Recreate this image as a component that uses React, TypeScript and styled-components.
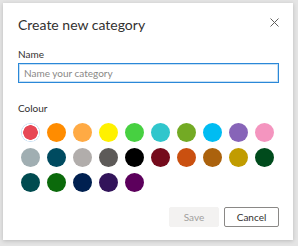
import styled, { createGlobalStyle } from 'styled-components';

const GlobalStyle = createGlobalStyle`
  html, body {
    margin: 0;
    padding: 0;
    background: #e4e4e4;
    font-family: Lato, "Open Sans", sans-serif;
  }
`;

const Page = styled.div`
  width: 298px;
  height: 246px;
  padding: 3px 5px 6px 3px;
  box-sizing: border-box;
`;

const Dialog = styled.div`
  height: 237px;
  background: #fff;
  box-shadow: 0 1px 4px rgba(0, 0, 0, 0.18);
  padding: 11px 14px 0 15px;
  box-sizing: border-box;
  display: flex;
  flex-direction: column;
`;

const Header = styled.div`
  display: flex;
  justify-content: space-between;
  align-items: flex-start;
  height: 22px;
`;

const Title = styled.h1`
  margin: 0;
  font-size: 14px;
  line-height: 22px;
  font-weight: 400;
  color: #323130;
`;

const CloseButton = styled.button`
  border: none;
  background: none;
  padding: 0;
  margin-top: 4px;
  width: 9px;
  height: 9px;
  display: flex;
`;

const Label = styled.div<{ $top: number }>`
  font-size: 10px;
  line-height: 14px;
  color: #323130;
  margin-top: ${(p) => p.$top}px;
`;

const Input = styled.input`
  margin-top: 2px;
  width: 100%;
  height: 20px;
  box-sizing: border-box;
  border: 1px solid #2b88d8;
  box-shadow: inset 0 0 0 1px #c7e0f4;
  padding: 0 5px;
  font-family: inherit;
  font-size: 10px;
  color: #323130;
  outline: none;
  &::placeholder {
    color: #8a8886;
  }
`;

const Swatches = styled.div`
  margin-top: 8px;
  display: grid;
  grid-template-columns: repeat(10, 19px);
  column-gap: 7px;
  row-gap: 6px;
  padding-left: 3px;
`;

const Swatch = styled.div<{ $color: string; $selected?: boolean }>`
  width: 19px;
  height: 19px;
  border-radius: 50%;
  background: ${(p) =>
    p.$selected
      ? `radial-gradient(circle, ${p.$color} 0 7px, #fff 7.5px 8.5px, #c7e0f4 9px)`
      : p.$color};
`;

const Footer = styled.div`
  margin-top: auto;
  margin-bottom: 13px;
  display: flex;
  justify-content: flex-end;
  gap: 5px;
`;

const Button = styled.button<{ $disabled?: boolean }>`
  height: 20px;
  padding: 0;
  width: ${(p) => (p.$disabled ? 50 : 55)}px;
  font-family: inherit;
  font-size: 10px;
  border-radius: 2px;
  border: 1px solid ${(p) => (p.$disabled ? '#f3f2f1' : '#8a8886')};
  background: ${(p) => (p.$disabled ? '#f3f2f1' : '#fff')};
  color: ${(p) => (p.$disabled ? '#a19f9d' : '#323130')};
`;

const colours = [
  '#e74856', '#ff8c00', '#ffaa44', '#fff100', '#47d041', '#30c6cc', '#73aa24', '#00bcf2', '#8764b8', '#f495bf',
  '#a0aeb2', '#004b60', '#b1adab', '#5d5a58', '#000000', '#750b1c', '#ca5010', '#ab620d', '#c19c00', '#004b1c',
  '#004b50', '#0b6a0b', '#002050', '#32145a', '#5c005c',
];

export default function App() {
  return (
    <Page>
      <GlobalStyle />
      <Dialog>
        <Header>
          <Title>Create new category</Title>
          <CloseButton aria-label="Close">
            <svg width="9" height="9" viewBox="0 0 9 9">
              <path d="M0.5 0.5L8.5 8.5M8.5 0.5L0.5 8.5" stroke="#605e5c" strokeWidth="1" />
            </svg>
          </CloseButton>
        </Header>
        <Label $top={11}>Name</Label>
        <Input placeholder="Name your category" />
        <Label $top={18}>Colour</Label>
        <Swatches>
          {colours.map((c, i) => (
            <Swatch key={c} $color={c} $selected={i === 0} />
          ))}
        </Swatches>
        <Footer>
          <Button $disabled>Save</Button>
          <Button>Cancel</Button>
        </Footer>
      </Dialog>
    </Page>
  );
}
